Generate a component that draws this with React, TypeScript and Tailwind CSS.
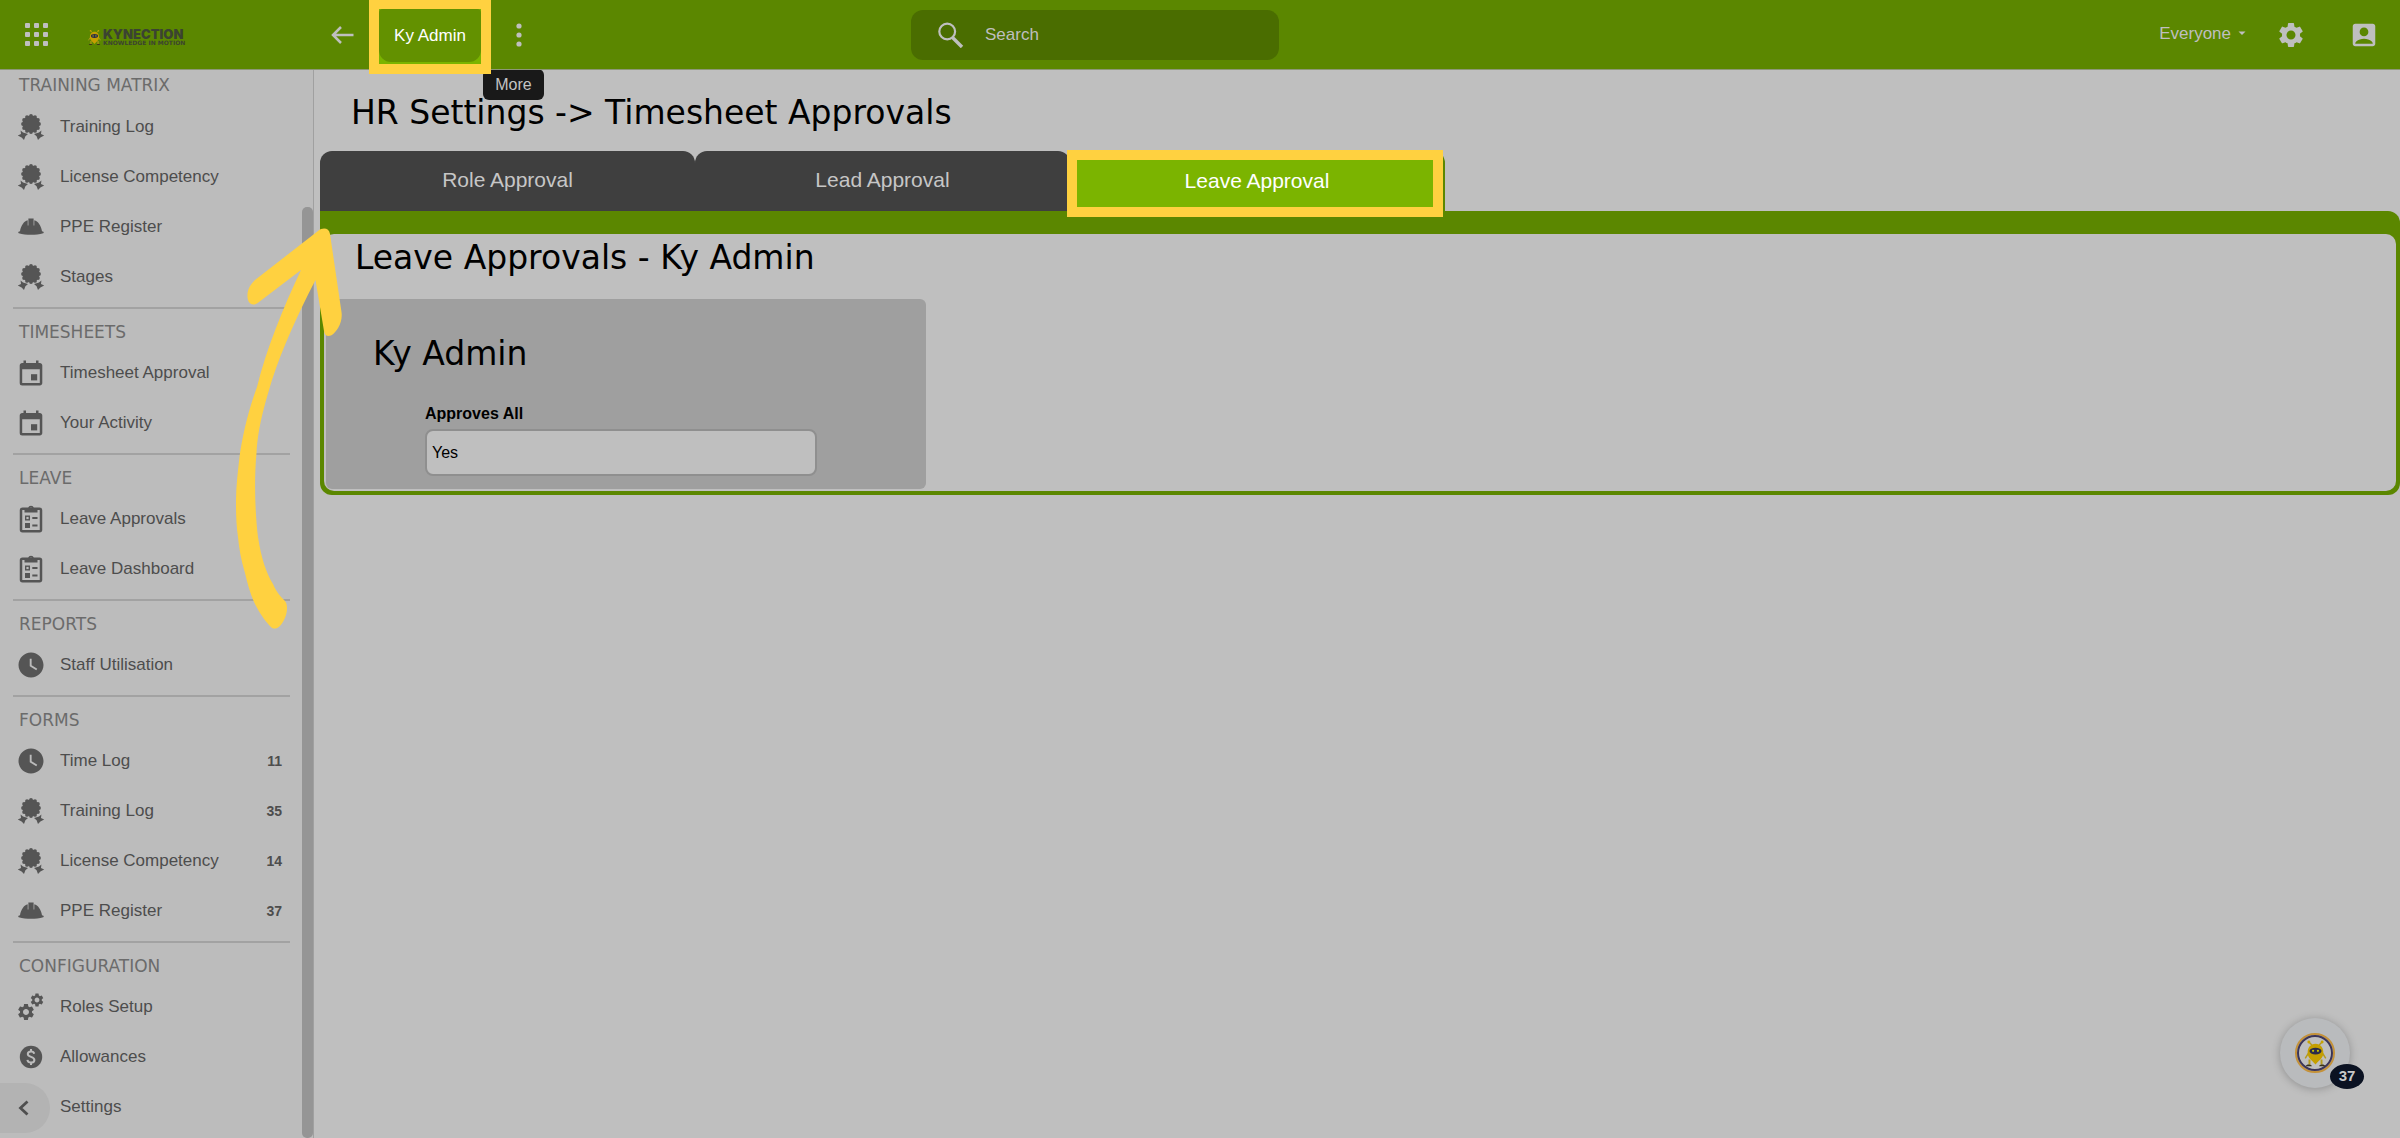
import React from "react";
import { MdAccountBox, MdSettings, MdWatchLater } from "react-icons/md";

type IconName = "badge" | "helmet" | "calendar" | "clipboard" | "clock" | "gears" | "dollar" | "none";

type Item = { label: string; icon: IconName; count?: number };
type Section = { title: string; items: Item[] };

const sections: Section[] = [
  {
    title: "TRAINING MATRIX",
    items: [
      { label: "Training Log", icon: "badge" },
      { label: "License Competency", icon: "badge" },
      { label: "PPE Register", icon: "helmet" },
      { label: "Stages", icon: "badge" },
    ],
  },
  {
    title: "TIMESHEETS",
    items: [
      { label: "Timesheet Approval", icon: "calendar" },
      { label: "Your Activity", icon: "calendar" },
    ],
  },
  {
    title: "LEAVE",
    items: [
      { label: "Leave Approvals", icon: "clipboard" },
      { label: "Leave Dashboard", icon: "clipboard" },
    ],
  },
  { title: "REPORTS", items: [{ label: "Staff Utilisation", icon: "clock" }] },
  {
    title: "FORMS",
    items: [
      { label: "Time Log", icon: "clock", count: 11 },
      { label: "Training Log", icon: "badge", count: 35 },
      { label: "License Competency", icon: "badge", count: 14 },
      { label: "PPE Register", icon: "helmet", count: 37 },
    ],
  },
  {
    title: "CONFIGURATION",
    items: [
      { label: "Roles Setup", icon: "gears" },
      { label: "Allowances", icon: "dollar" },
      { label: "Settings", icon: "none" },
    ],
  },
];

const petals = Array.from({ length: 12 }, (_, i) => {
  const a = (i * Math.PI) / 6;
  return { x: 15 + 8 * Math.sin(a), y: 12 - 8 * Math.cos(a) };
});

function BadgeIcon() {
  return (
    <svg width="30" height="30" viewBox="0 0 30 30" fill="currentColor" aria-hidden="true">
      <circle cx="15" cy="12" r="8.4" />
      {petals.map((p, i) => (
        <circle key={i} cx={p.x} cy={p.y} r="1.9" />
      ))}
      <path d="M4.600 18.600 7 20.600 12 22 9.400 24.200 8 28 5.600 25.600 1.800 23.600 5 22Z" />
      <path d="M25.400 18.600 23 20.600 18 22 20.600 24.200 22 28 24.400 25.600 28.200 23.600 25 22Z" />
    </svg>
  );
}

function HelmetIcon() {
  return (
    <svg width="30" height="30" viewBox="0 0 30 30" fill="currentColor" aria-hidden="true">
      <path d="M12.400 6.500h5.200v7l.7-.1V8.200c3.700 1 6.700 5 7.700 11l1.400.6c.5.3.4 1.300-.2 1.500-7.300 2-17.100 2-24.400 0-.6-.2-.7-1.200-.2-1.500l1.400-.6c1-6 4-10 7.700-11v5.200l.7.1Z" />
    </svg>
  );
}

function CalendarIcon() {
  return (
    <svg width="30" height="30" viewBox="0 0 30 30" fill="currentColor" aria-hidden="true">
      <path
        fillRule="evenodd"
        d="M7.500 2.500H10V5h10V2.500h2.500V5h1.300c1.400 0 2.500 1.100 2.500 2.500V25c0 1.400-1.100 2.500-2.500 2.500H6.200A2.500 2.500 0 0 1 3.700 25V7.500C3.700 6.100 4.800 5 6.200 5h1.300ZM6.200 11.200V25h17.600V11.200Z"
      />
      <rect x="15" y="16.200" width="6.200" height="6.200" />
    </svg>
  );
}

function ClipboardIcon() {
  return (
    <svg width="30" height="30" viewBox="0 0 30 30" fill="none" stroke="currentColor" aria-hidden="true">
      <rect x="5" y="4.800" width="20" height="22.500" rx="1.500" strokeWidth="2.500" />
      <path fill="currentColor" stroke="none" fillRule="evenodd" d="M8.500 4h3.600a3 3 0 0 1 5.800 0h3.600v4.500h-13ZM15 3.400a1.200 1.200 0 1 0 0 2.400 1.200 1.200 0 0 0 0-2.400Z" />
      <rect x="9.700" y="12.200" width="3.600" height="3.600" strokeWidth="1.400" />
      <rect x="9" y="19" width="5" height="5" fill="currentColor" stroke="none" />
      <path d="M16.300 14.100h5.200M16.300 21.500h5.200" strokeWidth="2" />
    </svg>
  );
}

function DollarIcon() {
  return (
    <svg width="30" height="30" viewBox="0 0 30 30" fill="none" aria-hidden="true">
      <circle cx="15" cy="15" r="11.200" fill="currentColor" />
      <path d="M18.200 11.800c-.3-1.500-1.600-2.300-3.200-2.300-1.900 0-3.200 1-3.200 2.500 0 3.600 6.600 2.200 6.600 5.900 0 1.600-1.400 2.600-3.400 2.600s-3.300-1-3.600-2.700M15 7v2.500M15 20.500V23" stroke="#bcbcbc" strokeWidth="2" />
    </svg>
  );
}

function ItemIcon({ name }: { name: IconName }) {
  switch (name) {
    case "badge":
      return <BadgeIcon />;
    case "helmet":
      return <HelmetIcon />;
    case "calendar":
      return <CalendarIcon />;
    case "clipboard":
      return <ClipboardIcon />;
    case "clock":
      return <MdWatchLater size={30} />;
    case "dollar":
      return <DollarIcon />;
    case "gears":
      return (
        <svg width="30" height="30" viewBox="0 0 30 30" aria-hidden="true">
          <MdSettings x="0" y="10" size={20} />
          <MdSettings x="13" y="0" size={16} />
        </svg>
      );
    default:
      return null;
  }
}

function Bee({ size }: { size: number }) {
  return (
    <svg width={size} height={size} viewBox="0 0 24 24" aria-hidden="true">
      <path d="M9 5 6.500 2.500M15 5l2.500-2.500M6 12l-2.500 4M18 12l2.500 4" stroke="#b59a1e" strokeWidth="1.200" fill="none" />
      <circle cx="6.500" cy="2.500" r="1.200" fill="#c9a300" />
      <circle cx="17.500" cy="2.500" r="1.200" fill="#c9a300" />
      <path d="M12 4c4 0 6.500 3 6.500 7.500 0 4-3.500 6-6.500 9.500-3-3.500-6.500-5.500-6.500-9.500C5.500 7 8 4 12 4Z" fill="#c59f00" />
      <ellipse cx="12" cy="10" rx="5" ry="2.800" fill="#2a2b4a" />
      <circle cx="10" cy="9.800" r=".9" fill="#c9c400" />
      <circle cx="14" cy="9.800" r=".9" fill="#c9c400" />
      <path d="M7 17v4M17 17v4" stroke="#b59a1e" strokeWidth="1.600" />
      <path d="M4 22.500c0-2 5-2 5 0ZM15 22.500c0-2 5-2 5 0Z" fill="#3a3418" />
    </svg>
  );
}

function Header() {
  return (
    <header className="relative z-20 flex h-[70px] items-center border-b border-[#8d9778] bg-[#5b8700] text-[17px] text-[#bfbfbf]">
      <div className="flex h-full w-[911px] shrink-0 items-center">
        <button aria-label="Apps" className="ml-[25px]">
          <svg width="23" height="23" viewBox="0 0 23 23" fill="currentColor">
            {[0, 9, 18].map((y) =>
              [0, 9, 18].map((x) => <rect key={`${x}-${y}`} x={x} y={y} width="5" height="5" rx="1" />),
            )}
          </svg>
        </button>
        <a href="#home" className="ml-[38px] flex w-[104px] items-center pt-[6px] font-['Inter'] text-[#3b4331]">
          <Bee size={17} />
          <span className="flex flex-col">
            <span className="text-[13px] leading-[11px] font-black">KYNECTION</span>
            <span className="font-['DejaVu_Sans'] text-[6px] leading-[6px] font-bold whitespace-nowrap">KNOWLEDGE IN MOTION</span>
          </span>
        </a>
        <button aria-label="Back" className="ml-[141px]">
          <svg width="23" height="18" viewBox="0 0 23 18" fill="none" stroke="currentColor" strokeWidth="2.500">
            <path d="M22.500 9H2M10 1 2 9l8 8" />
          </svg>
        </button>
        <button className="ml-[15px] h-[74px] w-[122px] self-start border-[10px] border-t-[9px] border-[#ffd140] bg-[#7bb400] text-white">
          <span className="mb-[2px] flex h-[53px] items-center justify-center rounded-t-[4px] rounded-b-[12px] bg-[#639100]">Ky Admin</span>
        </button>
        <button aria-label="More" className="ml-[25px]">
          <svg width="6" height="24" viewBox="0 0 6 24" fill="currentColor">
            <circle cx="3" cy="3" r="2.600" />
            <circle cx="3" cy="12" r="2.600" />
            <circle cx="3" cy="21" r="2.600" />
          </svg>
        </button>
      </div>
      <label className="flex h-[50px] w-[368px] items-center rounded-[12px] bg-[#4a6d00] pl-[27px]">
        <svg width="26" height="26" viewBox="0 0 26 26" fill="none" stroke="currentColor" aria-hidden="true">
          <circle cx="9.200" cy="9.500" r="7.900" strokeWidth="2.200" />
          <path d="M14.500 15.500 24 25" strokeWidth="3.400" />
        </svg>
        <input
          type="text"
          aria-label="Search"
          placeholder="Search"
          className="ml-[21px] min-w-0 flex-1 bg-transparent placeholder:text-[#bfbfbf]"
        />
      </label>
      <div className="flex flex-1 items-center justify-end pr-[21px]">
        <button className="flex items-center gap-[7px] pb-[2px]">
          Everyone
          <svg width="8" height="5" viewBox="0 0 8 5" fill="currentColor" aria-hidden="true">
            <path d="M.5.500h7L4 4Z" />
          </svg>
        </button>
        <button aria-label="Settings" className="ml-[30px]">
          <MdSettings size={30} />
        </button>
        <button aria-label="Account" className="ml-[43px]">
          <MdAccountBox size={30} />
        </button>
      </div>
    </header>
  );
}

function Sidebar() {
  return (
    <aside className="relative flex w-[314px] shrink-0 border-r border-[#a0a0a0] bg-[#bcbcbc]">
      <nav className="flex-1 pl-[13px] pr-[12px]">
        {sections.map((s, i) => (
          <section key={s.title} className={i === 0 ? "" : "mt-[5px] border-t-2 border-[#a2a2a2]"}>
            <h2
              className={
                i === 0
                  ? "flex h-[32px] items-center pl-[6px] font-['DejaVu_Sans'] text-[17px] text-[#6b6b6b]"
                  : "flex h-[39px] items-end pb-[3px] pl-[6px] font-['DejaVu_Sans'] text-[17px] text-[#6b6b6b]"
              }
            >
              {s.title}
            </h2>
            {s.items.map((it) => (
              <a key={it.label} href="#item" className="flex h-[50px] items-center pl-[3px] pr-[8px] text-[17px] text-[#4d4d4d]">
                <span className="flex size-[30px] items-center justify-center text-[#555555]">
                  <ItemIcon name={it.icon} />
                </span>
                <span className="ml-[14px] flex-1">{it.label}</span>
                {it.count !== undefined && <span className="text-[14px] font-bold">{it.count}</span>}
              </a>
            ))}
          </section>
        ))}
      </nav>
      <div className="mt-[137px] w-[11px] rounded-[5px] bg-[#959595]" />
      <button
        aria-label="Collapse menu"
        className="absolute bottom-[5px] left-0 flex h-[50px] w-[50px] items-center rounded-r-full bg-[#b3b3b3] pl-[18px] text-[#4f4f4f]"
      >
        <svg width="11" height="16" viewBox="0 0 11 16" fill="none" stroke="currentColor" strokeWidth="2.800">
          <path d="M9.500 1.500 2.500 8l7 6.500" />
        </svg>
      </button>
    </aside>
  );
}

function Main() {
  return (
    <main className="min-w-0 flex-1 bg-[#bfbfbf] pl-[6px] text-black">
      <h1 className="flex h-[81px] items-center pt-1 pl-[31px] font-['DejaVu_Sans'] text-[33px]">
        HR Settings -&gt; Timesheet Approvals
      </h1>
      <div role="tablist" className="flex text-[21px] text-[#c6c6c6]">
        <button role="tab" className="h-[60px] w-[375px] rounded-t-[12px] bg-[#3f3f3f] pb-[2px]">
          Role Approval
        </button>
        <button role="tab" className="h-[60px] w-[375px] rounded-t-[12px] bg-[#3f3f3f] pb-[2px]">
          Lead Approval
        </button>
        <button role="tab" aria-selected="true" className="relative h-[60px] w-[375px] rounded-t-[12px] bg-[#5b8700] text-white">
          <span className="absolute -top-px -left-[3px] flex h-[67px] w-[376px] items-center justify-center border-[10px] border-[#ffd140] bg-[#7bb400] pb-[6px] pl-[4px]">
            Leave Approval
          </span>
        </button>
      </div>
      <div className="rounded-tr-[12px] rounded-b-[12px] bg-[#5b8700] px-[4px] pt-[23px] pb-[4px]">
        <div className="rounded-[10px] bg-[#bfbfbf] pb-[2px]">
          <h2 className="mb-[18px] flex h-[47px] items-center pl-[31px] font-['DejaVu_Sans'] text-[33px]">
            Leave Approvals - Ky Admin
          </h2>
          <section className="ml-[2px] w-[600px] rounded-[6px] bg-[#9f9f9f] pt-[33px] pb-[13px]">
            <h3 className="pl-[47px] font-['DejaVu_Sans'] text-[33px] leading-[44px]">Ky Admin</h3>
            <div className="mt-[26px] flex flex-col pl-[99px] text-[16px]">
              <label htmlFor="approves-all" className="mb-[3px] leading-[24px] font-bold">
                Approves All
              </label>
              <input
                id="approves-all"
                type="text"
                defaultValue="Yes"
                className="h-[47px] w-[392px] rounded-[8px] border-2 border-[#8f8f8f] bg-[#bfbfbf] px-[5px]"
              />
            </div>
          </section>
        </div>
      </div>
    </main>
  );
}

export default function App() {
  return (
    <div className="relative flex min-h-screen flex-col bg-[#bfbfbf] font-['Liberation_Sans',sans-serif]">
      <Header />
      <div className="flex flex-1">
        <Sidebar />
        <Main />
      </div>
      <div
        role="tooltip"
        className="absolute top-[69px] left-[483px] z-10 flex h-[31px] w-[61px] items-center justify-center rounded-[6px] bg-[#191919] text-[16px] text-[#c4c4c4]"
      >
        More
      </div>
      <svg className="pointer-events-none absolute top-[220px] left-[230px] z-30" width="120" height="420" viewBox="230 220 120 420" fill="#ffd140" aria-hidden="true">
        <path d="M318 231C323 227 329 228 330 234L341.500 312C343 322 337 332 331 335.500C327 337 324.500 335 324 331L315.500 280C296 318 283 347 272 380C262 413 258 430 256.500 453C254 480 255 512 258 537C261 557 266 573 273 584C277 593 281 597 284 600C288 603 288 612 284 620C280 628 274 632 269 625C262 617 258 610 254 602C250 593 247 582 245 573C241 560 239 548 238 537C236 523 236 512 236 500C236 486 238 470 240 453C244 428 250 406 257 387C266 350 283 308 301 270L259 302C253 307 248 304 247.500 297C247 289 251 284 255 280Z" />
      </svg>
      <button
        aria-label="Help, 37 unread"
        className="absolute right-[50px] bottom-[50px] z-10 flex size-[70px] items-center justify-center rounded-full bg-[#b9bbbd] shadow-[0_1px_8px_rgba(0,0,0,0.25)]"
      >
        <span className="flex size-[40px] items-center justify-center rounded-full border-2 border-[#c4923a] bg-[#bfbfbf]">
          <span className="flex size-[36px] items-center justify-center rounded-full border-2 border-[#3c3558]">
            <Bee size={29} />
          </span>
        </span>
        <span className="absolute top-[46px] left-[50px] flex h-[25px] w-[34px] items-center justify-center rounded-[50%] bg-[#0b1222] text-[15px] font-bold text-[#c8c8c8]">
          37
        </span>
      </button>
    </div>
  );
}
